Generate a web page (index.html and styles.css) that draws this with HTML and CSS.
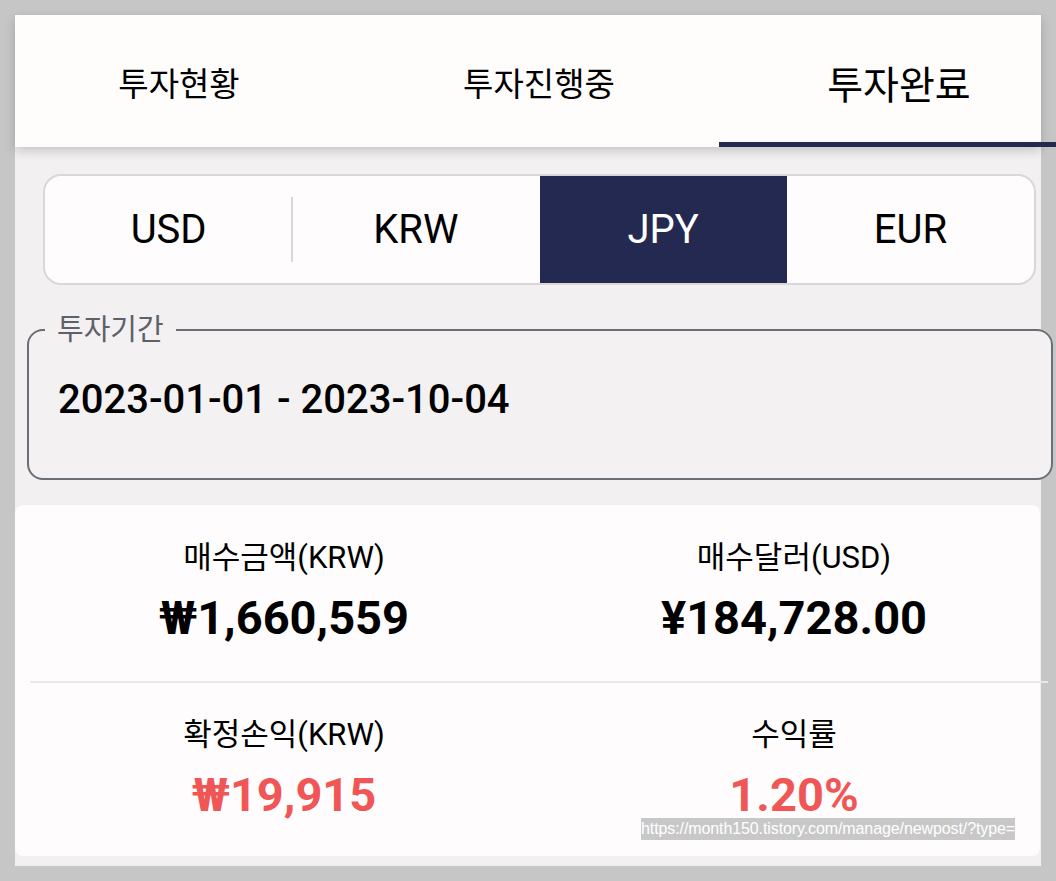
FILE: index.html
```html
<!DOCTYPE html>
<html lang="ko">
<head>
<meta charset="utf-8">
<title>투자완료</title>
<link rel="stylesheet" href="styles.css">
</head>
<body>
<div class="app">
  <header class="header">
    <nav class="tabs">
      <div class="tab">투자현황</div>
      <div class="tab">투자진행중</div>
      <div class="tab active">투자완료</div>
    </nav>
  </header>

  <div class="segments">
    <div class="seg sep">USD</div>
    <div class="seg">KRW</div>
    <div class="seg selected">JPY</div>
    <div class="seg">EUR</div>
  </div>

  <fieldset class="period">
    <legend class="period-label">투자기간</legend>
    <div class="period-value">2023-01-01 - 2023-10-04</div>
  </fieldset>

  <section class="card">
    <div class="cell">
      <div class="label">매수금액(KRW)</div>
      <div class="value">₩1,660,559</div>
    </div>
    <div class="cell">
      <div class="label">매수달러(USD)</div>
      <div class="value">¥184,728.00</div>
    </div>
    <div class="divider"></div>
    <div class="cell">
      <div class="label">확정손익(KRW)</div>
      <div class="value red">₩19,915</div>
    </div>
    <div class="cell">
      <div class="label">수익률</div>
      <div class="value red">1.20%</div>
    </div>
  </section>

  <div class="url-tip">https://month150.tistory.com/manage/newpost/?type=</div>
</div>
</body>
</html>
```

FILE: styles.css
```css
html, body {
  margin: 0;
  padding: 0;
}
body {
  width: 1056px;
  height: 881px;
  overflow: hidden;
  background: #c7c6c7;
  font-family: Roboto, "Noto Sans CJK KR", sans-serif;
  color: #000;
}
.app {
  position: relative;
  margin: 15px 0 0 15px;
  width: 1026px;
  height: 851px;
  background: #f2f0f1;
  display: flex;
  flex-direction: column;
}

/* header tabs */
.header {
  position: relative;
  z-index: 2;
  height: 132px;
  background: #fffcfc;
  box-shadow: 0 4px 10px rgba(0, 0, 0, 0.18);
}
.tabs {
  display: flex;
  margin-left: -16px;
  width: 1080px;
  height: 132px;
}
.tab {
  flex: 0 0 360px;
  box-sizing: border-box;
  display: flex;
  align-items: center;
  justify-content: center;
  padding-top: 2px;
  font-size: 33px;
  color: #000;
}
.tab.active {
  font-size: 39px;
  border-bottom: 5px solid #222a50;
  padding-top: 7px;
}

/* currency segments */
.segments {
  margin: 27px 0 0 28px;
  width: 993px;
  height: 111px;
  box-sizing: border-box;
  border: 2px solid #d9d7d8;
  border-radius: 18px;
  background: #fefcfc;
  display: grid;
  grid-template-columns: repeat(4, 1fr);
  overflow: hidden;
}
.seg {
  position: relative;
  display: flex;
  align-items: center;
  justify-content: center;
  font-size: 40px;
  color: #000;
}
.seg.sep::after {
  content: "";
  position: absolute;
  right: -1px;
  top: 21px;
  bottom: 21px;
  width: 2px;
  background: #d9d7d8;
}
.seg.selected {
  background: #232950;
  color: #fff;
}

/* period field */
.period {
  margin: 28px 0 0 12px;
  width: 1026px;
  height: 167px;
  box-sizing: border-box;
  border: 2px solid #6b6e75;
  border-radius: 16px;
  padding: 0 0 0 16px;
  background: #f3f1f2;
}
.period-label {
  padding: 0 12px;
  font-size: 29px;
  line-height: 34px;
  color: #5e6167;
}
.period-value {
  padding: 28px 0 0 13px;
  font-size: 40px;
  font-weight: 500;
  line-height: 50px;
  color: #000;
}

/* stats card */
.card {
  margin-top: 25px;
  width: 1025px;
  height: 351px;
  box-sizing: border-box;
  background: #fefcfc;
  border-radius: 8px;
  padding-left: 14px;
  display: grid;
  grid-template-columns: 510px 510px;
  grid-template-rows: 176px 2px 173px;
}
.cell {
  display: flex;
  flex-direction: column;
  align-items: center;
  padding-top: 34px;
  box-sizing: border-box;
}
.label {
  font-size: 31px;
  line-height: 38px;
  color: #000;
}
.value {
  margin-top: 15px;
  font-size: 47px;
  font-weight: 700;
  line-height: 52px;
  color: #000;
}
.value.red {
  color: #f05656;
}
.divider {
  grid-column: 1 / span 2;
  margin-left: 1px;
  width: 1018px;
  height: 2px;
  background: #e9e7e7;
}
.cell:nth-of-type(n+3) {
  padding-top: 33px;
}

/* url tooltip overlay */
.url-tip {
  position: absolute;
  left: 626px;
  top: 803px;
  width: 374px;
  height: 22px;
  background: #c9c8c9;
  color: #fff;
  font-family: "Liberation Sans", Arial, sans-serif;
  font-size: 16px;
  letter-spacing: -0.1px;
  line-height: 22px;
  white-space: nowrap;
  overflow: hidden;
}
```
